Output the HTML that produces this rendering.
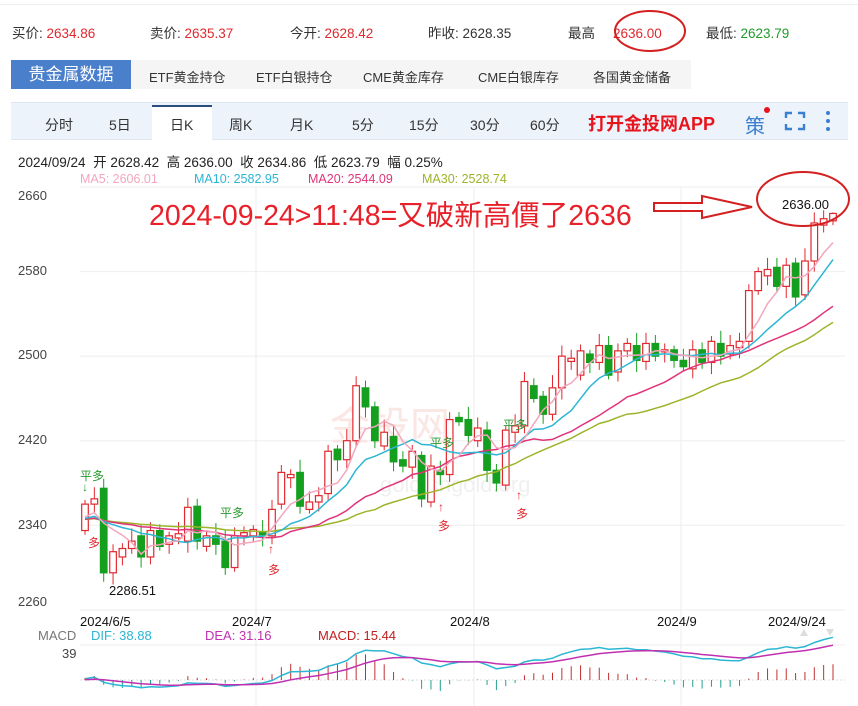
<!DOCTYPE html>
<html><head><meta charset="utf-8">
<style>
*{margin:0;padding:0;box-sizing:border-box}
body{width:858px;height:706px;background:#fff;font-family:"Liberation Sans","Noto Sans CJK SC",sans-serif;position:relative;overflow:hidden;color:#333}
.a{position:absolute;white-space:nowrap}
.r{color:#e0282e}.g{color:#1f9b2a}
.pd{position:absolute;font-size:12px;color:#2a9a30;white-space:nowrap}
.dd{position:absolute;font-size:12px;color:#e0282e;white-space:nowrap}
</style></head><body>
<div class="a" style="left:0;top:4px;width:858px;height:1px;background:#eee"></div>
<div class="a" style="top:22px;left:12px;font-size:13.5px">买价: <span class="r">2634.86</span></div>
<div class="a" style="top:22px;left:150px;font-size:13.5px">卖价: <span class="r">2635.37</span></div>
<div class="a" style="top:22px;left:290px;font-size:13.5px">今开: <span class="r">2628.42</span></div>
<div class="a" style="top:22px;left:428px;font-size:13.5px">昨收: 2628.35</div>
<div class="a" style="top:22px;left:568px;font-size:13.5px">最高<span class="r" style="margin-left:18px">2636.00</span></div>
<div class="a" style="top:22px;left:706px;font-size:13.5px">最低: <span class="g">2623.79</span></div>

<div class="a" style="left:11px;top:60px;width:120px;height:29px;background:#4a7fcb;color:#fff;font-size:17px;line-height:29px;text-align:center">贵金属数据</div>
<div class="a" style="left:131px;top:60px;width:560px;height:29px;background:#f5f5f5"></div>
<div class="a" style="top:67px;left:149px;font-size:13px">ETF黄金持仓</div>
<div class="a" style="top:67px;left:256px;font-size:13px">ETF白银持仓</div>
<div class="a" style="top:67px;left:363px;font-size:13px">CME黄金库存</div>
<div class="a" style="top:67px;left:478px;font-size:13px">CME白银库存</div>
<div class="a" style="top:67px;left:593px;font-size:13px">各国黄金储备</div>

<div class="a" style="left:11px;top:102px;width:837px;height:38px;background:#edf3fb;border-top:1px solid #dde6f2;border-bottom:1px solid #dde6f2"></div>
<div class="a" style="left:152px;top:105px;width:60px;height:35px;background:#fff;border-top:2px solid #2a4d7e"></div>
<div class="a" style="top:115px;left:45px;font-size:14px">分时</div>
<div class="a" style="top:115px;left:109px;font-size:14px">5日</div>
<div class="a" style="top:115px;left:170px;font-size:14px">日K</div>
<div class="a" style="top:115px;left:229px;font-size:14px">周K</div>
<div class="a" style="top:115px;left:290px;font-size:14px">月K</div>
<div class="a" style="top:115px;left:352px;font-size:14px">5分</div>
<div class="a" style="top:115px;left:409px;font-size:14px">15分</div>
<div class="a" style="top:115px;left:470px;font-size:14px">30分</div>
<div class="a" style="top:115px;left:530px;font-size:14px">60分</div>
<div class="a" style="top:110px;left:588px;font-size:18px;font-weight:bold;color:#e8141c">打开金投网APP</div>
<div class="a" style="top:110px;left:745px;font-size:20px;color:#3a7fd0">策</div>
<div class="a" style="left:764px;top:107px;width:6px;height:6px;border-radius:3px;background:#e8141c"></div>
<svg class="a" style="left:784px;top:111px" width="22" height="20"><path d="M2 7V2h6M14 2h6v5M20 13v5h-6M8 18H2v-5" fill="none" stroke="#3a7fd0" stroke-width="2.4"/></svg>
<svg class="a" style="left:824px;top:110px" width="8" height="22"><circle cx="4" cy="3" r="2" fill="#3a7fd0"/><circle cx="4" cy="11" r="2" fill="#3a7fd0"/><circle cx="4" cy="19" r="2" fill="#3a7fd0"/></svg>

<div class="a" style="top:151px;left:18px;font-size:13.5px;color:#222">2024/09/24 &nbsp;开 2628.42 &nbsp;高 2636.00 &nbsp;收 2634.86 &nbsp;低 2623.79 &nbsp;幅 0.25%</div>
<div class="a" style="top:172px;left:80px;font-size:12.5px;color:#f3a6bd">MA5: 2606.01</div>
<div class="a" style="top:172px;left:194px;font-size:12.5px;color:#2bb6d4">MA10: 2582.95</div>
<div class="a" style="top:172px;left:308px;font-size:12.5px;color:#e0347a">MA20: 2544.09</div>
<div class="a" style="top:172px;left:422px;font-size:12.5px;color:#9cb42a">MA30: 2528.74</div>

<svg id="ch" class="a" style="left:0;top:0" width="858" height="706"></svg>

<div class="a" style="top:188px;left:18px;font-size:13px;color:#444">2660</div>
<div class="a" style="top:263px;left:18px;font-size:13px;color:#444">2580</div>
<div class="a" style="top:347px;left:18px;font-size:13px;color:#444">2500</div>
<div class="a" style="top:432px;left:18px;font-size:13px;color:#444">2420</div>
<div class="a" style="top:517px;left:18px;font-size:13px;color:#444">2340</div>
<div class="a" style="top:594px;left:18px;font-size:13px;color:#444">2260</div>
<div class="a" style="top:583px;left:109px;font-size:13px;color:#111">2286.51</div>
<div class="a" style="top:614px;left:80px;font-size:13px;color:#111">2024/6/5</div>
<div class="a" style="top:614px;left:232px;font-size:13px;color:#111">2024/7</div>
<div class="a" style="top:614px;left:450px;font-size:13px;color:#111">2024/8</div>
<div class="a" style="top:614px;left:657px;font-size:13px;color:#111">2024/9</div>
<div class="a" style="top:614px;left:768px;font-size:13px;color:#111">2024/9/24</div>
<div class="a" style="top:628px;left:38px;font-size:13px;color:#777">MACD</div>
<div class="a" style="top:628px;left:91px;font-size:13px;color:#2bb6d4">DIF: 38.88</div>
<div class="a" style="top:628px;left:205px;font-size:13px;color:#c030b0">DEA: 31.16</div>
<div class="a" style="top:628px;left:318px;font-size:13px;color:#c02020">MACD: 15.44</div>
<div class="a" style="top:646px;left:62px;font-size:13px;color:#444">39</div>
<div class="a" style="top:193px;left:149px;font-size:28.5px;color:#e8202a">2024-09-24&gt;11:48=又破新高價了2636</div>
<div class="a" style="top:197px;left:782px;font-size:13px;color:#111">2636.00</div>

<div class="pd" style="left:80px;top:467px">平多</div>
<div class="pd" style="left:82px;top:480px">↓</div>
<div class="dd" style="left:88px;top:534px">多</div>
<div class="pd" style="left:220px;top:504px">平多</div>
<div class="dd" style="left:268px;top:542px">↑</div>
<div class="dd" style="left:268px;top:561px">多</div>
<div class="pd" style="left:430px;top:434px">平多</div>
<div class="dd" style="left:438px;top:500px">↑</div>
<div class="dd" style="left:438px;top:517px">多</div>
<div class="pd" style="left:503px;top:416px">平多</div>
<div class="dd" style="left:516px;top:488px">↑</div>
<div class="dd" style="left:516px;top:505px">多</div>

<script>
var s=document.getElementById('ch'),h='';
function Y(v){return 440.7+(2420-v)*1.057}
[2580,2500,2420,2340].forEach(function(v){h+='<line x1="80" x2="845" y1="'+Y(v)+'" y2="'+Y(v)+'" stroke="#eee"/>'});
h+='<line x1="80" x2="845" y1="187" y2="187" stroke="#eee"/>';
h+='<line x1="80" x2="845" y1="610" y2="610" stroke="#eee"/>';
[256,474,681].forEach(function(x){h+='<line x1="'+x+'" x2="'+x+'" y1="187" y2="706" stroke="#eee"/>'});
h+='<line x1="80" x2="845" y1="645" y2="645" stroke="#eee"/>';
h+='<line x1="80" x2="845" y1="680" y2="680" stroke="#ddd" stroke-dasharray="2 2"/>';
h+='<text x="330" y="440" font-size="40" fill="#fae6e3" font-family="Liberation Sans, Noto Sans CJK SC, sans-serif">金投网</text>';
h+='<text x="380" y="492" font-size="22" fill="#f0f0f0" font-family="Liberation Sans,sans-serif">gold.cngold.org</text>';
var D=[[2335,2360],[2360,2365],[2375,2295],[2295,2315],[2310,2318],[2318,2325],[2330,2310],[2310,2335],[2335,2320],[2322,2330],[2328,2332],[2325,2357],[2358,2325],[2320,2330],[2330,2322],[2325,2300],[2300,2330],[2330,2333],[2330,2336],[2334,2331],[2330,2355],[2360,2390],[2385,2388],[2390,2358],[2355,2362],[2362,2368],[2370,2410],[2412,2402],[2402,2420],[2420,2472],[2470,2452],[2452,2420],[2415,2428],[2424,2400],[2402,2396],[2395,2410],[2406,2365],[2362,2396],[2392,2388],[2388,2440],[2442,2438],[2440,2425],[2420,2432],[2430,2392],[2392,2380],[2378,2430],[2428,2434],[2434,2476],[2472,2460],[2462,2445],[2445,2470],[2470,2500],[2495,2498],[2482,2505],[2502,2494],[2494,2510],[2510,2482],[2485,2505],[2505,2512],[2510,2496],[2495,2512],[2512,2500],[2504,2506],[2506,2496],[2496,2490],[2488,2506],[2506,2494],[2494,2514],[2512,2500],[2502,2510],[2508,2514],[2514,2562],[2562,2580],[2576,2582],[2584,2566],[2566,2586],[2588,2556],[2558,2590],[2590,2626],[2624,2630],[2628,2635]];
var n=D.length,x0=85,dx=(833-85)/(n-1);
D.forEach(function(d,i){var x=x0+i*dx,o=d[0],c=d[1],hi=Math.max(o,c)+4+(i*7%9),lo=Math.min(o,c)-4-(i*5%8);if(i==2)lo=2286.5;if(i==n-1)hi=2636;
var up=c>=o,col=up?'#e0282e':'#14a01e';
h+='<line x1="'+x+'" x2="'+x+'" y1="'+Y(hi)+'" y2="'+Y(lo)+'" stroke="'+col+'"/>';
var t=Y(Math.max(o,c)),b=Y(Math.min(o,c));if(b-t<1.5)b=t+1.5;
h+='<rect x="'+(x-3.3)+'" y="'+t+'" width="6.6" height="'+(b-t)+'" fill="'+(up?'#fff':col)+'" stroke="'+col+'" stroke-width="1.2"/>';});
function ma(k,col){var p='';for(var i=0;i<n;i++){var sm=0,m=0;for(var j=i;j>i-k;j--){sm+=(j>=0?D[j][1]:2345);m++}p+=(i?'L':'M')+(x0+i*dx).toFixed(1)+' '+Y(sm/m).toFixed(1)}h+='<path d="'+p+'" fill="none" stroke="'+col+'" stroke-width="1.5"/>'}
ma(30,'#9cb42a');ma(20,'#e0347a');ma(10,'#2bb6d4');ma(5,'#f3a6bd');
var e1=2345,e2=2345,dea=0,pd='',pe='';
D.forEach(function(d,i){e1=e1+(d[1]-e1)*2/13;e2=e2+(d[1]-e2)*2/27;var dif=e1-e2;dea=dea+(dif-dea)*0.2;var x=x0+i*dx,Yd=function(v){return 680-v*1.1};
pd+=(i?'L':'M')+x.toFixed(1)+' '+Yd(dif).toFixed(1);pe+=(i?'L':'M')+x.toFixed(1)+' '+Yd(dea).toFixed(1);var m=(dif-dea)*2;
h+='<line x1="'+x+'" x2="'+x+'" y1="680" y2="'+Yd(m)+'" stroke="'+(m>0?'#c03030':'#20a090')+'"/>';});
h+='<path d="'+pd+'" fill="none" stroke="#2bb6d4" stroke-width="1.5"/><path d="'+pe+'" fill="none" stroke="#c030b0" stroke-width="1.5"/>';
h+='<ellipse cx="650" cy="31" rx="35" ry="20" fill="none" stroke="#d42020" stroke-width="2"/>';
h+='<ellipse cx="803" cy="199" rx="46" ry="27" fill="none" stroke="#d42020" stroke-width="2"/>';
h+='<path d="M654 203H702V196L752 207L702 218V211H654Z" fill="none" stroke="#d42020" stroke-width="2"/>';
h+='<path d="M800 636l4-7l4 7zM826 629l4 7l4-7z" fill="#ddd"/>';
s.innerHTML=h;
</script>
</body></html>
